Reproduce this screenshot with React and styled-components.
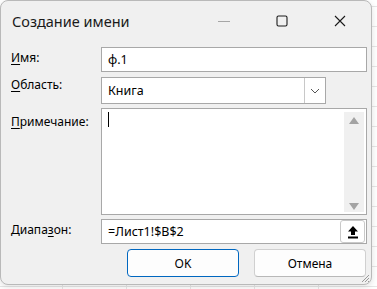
import React from "react";
import styled, { createGlobalStyle } from "styled-components";

const Global = createGlobalStyle`
  html, body { margin: 0; padding: 0; }
  body {
    width: 377px;
    height: 289px;
    overflow: hidden;
    background-color: #ffffff;
    background-image:
      linear-gradient(to right, #e6e6e6 1px, transparent 1px),
      linear-gradient(to bottom, #e6e6e6 1px, transparent 1px);
    background-size: 64px 20px;
    background-position: -2px 6px;
    font-family: "Segoe UI", "Noto Sans", sans-serif;
  }
`;

const Window = styled.div`
  box-sizing: border-box;
  width: 372px;
  height: 285px;
  background: #f0f0f0;
  border: 1px solid #b9b9b9;
  border-radius: 8px;
  box-shadow: 0 2px 6px rgba(0,0,0,0.12);
  display: flex;
  flex-direction: column;
  position: relative;
  overflow: hidden;
`;

const TitleBar = styled.div`
  height: 45px;
  display: flex;
  align-items: center;
  padding-left: 11px;
  padding-right: 2px;
  box-sizing: border-box;
  padding-bottom: 6px;
`;

const Title = styled.div`
  flex: 1;
  font-size: 14.5px;
  color: #1a1a1a;
`;

const Caption = styled.div`
  width: 58px;
  height: 40px;
  display: flex;
  align-items: center;
  justify-content: center;
`;

const Form = styled.div`
  display: grid;
  grid-template-columns: 90px 266px;
  padding-left: 10px;
  margin-top: 1px;
  row-gap: 4px;
`;

const Label = styled.div`
  font-size: 12px;
  line-height: 16px;
  color: #000;
  padding-top: ${p => p.$top ?? 3}px;
  u { text-decoration: underline; text-underline-offset: 2px; }
`;

const Field = styled.div`
  box-sizing: border-box;
  height: ${p => p.$h}px;
  margin-top: ${p => p.$mt || 0}px;
  background: #fff;
  border: 1px solid #a8a8a8;
  display: flex;
  align-items: center;
  padding-left: 6px;
  font-size: 12.5px;
  color: #000;
  position: relative;
`;

const SelectBox = styled(Field)`
  width: 225px;
  padding-right: 0;
`;

const SelectText = styled.div`
  flex: 1;
`;

const DropBtn = styled.div`
  box-sizing: border-box;
  width: 21px;
  height: 25px;
  border-left: 1px solid #c8c8c8;
  background: #fff;
  display: flex;
  align-items: center;
  justify-content: center;
`;

const TextArea = styled(Field)`
  align-items: flex-start;
  padding-top: 3px;
`;

const Caret = styled.div`
  width: 1px;
  height: 15px;
  background: #000;
`;

const ScrollBar = styled.div`
  position: absolute;
  right: 2px;
  top: 3px;
  bottom: 2px;
  width: 20px;
  background: #f0f0f0;
  display: flex;
  flex-direction: column;
  justify-content: space-between;
  align-items: center;
  padding: 5px 0 0;
`;

const RangeField = styled(Field)`
  padding-right: 1px;
`;

const RangeText = styled.div`
  flex: 1;
`;

const PickBtn = styled.div`
  box-sizing: border-box;
  width: 25px;
  height: 23px;
  background: #fff;
  border: 1px solid #c9c9c9;
  border-radius: 3px;
  display: flex;
  align-items: center;
  justify-content: center;
`;

const Buttons = styled.div`
  display: flex;
  gap: 15px;
  padding-left: 126px;
  margin-top: 5px;
`;

const Button = styled.button`
  box-sizing: border-box;
  width: ${p => p.$w}px;
  height: 28px;
  border-radius: 4px;
  background: #fdfdfd;
  border: 1px solid ${p => (p.$primary ? "#0067c0" : "#d0d0d0")};
  border-bottom-color: ${p => (p.$primary ? "#0067c0" : "#b8b8b8")};
  font-family: "Segoe UI", "Noto Sans", sans-serif;
  font-size: 12px;
  color: #000;
  padding: 0;
`;

const Grip = styled.svg`
  position: absolute;
  right: 1px;
  bottom: 1px;
`;

export default function App() {
  return (
    <>
      <Global />
      <Window>
        <TitleBar>
          <Title>Создание имени</Title>
          <Caption>
            <svg width="12" height="12" viewBox="0 0 12 12">
              <line x1="0" y1="6.5" x2="12" y2="6.5" stroke="#a6a6a6" strokeWidth="1" />
            </svg>
          </Caption>
          <Caption>
            <svg width="12" height="12" viewBox="0 0 12 12">
              <rect x="1" y="1" width="10" height="10" rx="1.5" fill="none" stroke="#1a1a1a" strokeWidth="1.1" />
            </svg>
          </Caption>
          <Caption>
            <svg width="12" height="12" viewBox="0 0 12 12">
              <path d="M1 1 L11 11 M11 1 L1 11" stroke="#1a1a1a" strokeWidth="1.1" />
            </svg>
          </Caption>
        </TitleBar>
        <Form>
          <Label><u>И</u>мя:</Label>
          <Field $h={25}>ф.1</Field>

          <Label $top={1}><u>О</u>бласть:</Label>
          <SelectBox $h={27} $mt={1}>
            <SelectText>Книга</SelectText>
            <DropBtn>
              <svg width="10" height="6" viewBox="0 0 10 6">
                <path d="M1 1 L5 5 L9 1" fill="none" stroke="#555" strokeWidth="1" />
              </svg>
            </DropBtn>
          </SelectBox>

          <Label $top={6}><u>П</u>римечание:</Label>
          <TextArea $h={107}>
            <Caret />
            <ScrollBar>
              <svg width="10" height="7" viewBox="0 0 10 7">
                <path d="M5 0 L10 7 L0 7 Z" fill="#a3a3a3" />
              </svg>
              <svg width="10" height="7" viewBox="0 0 10 7" style={{ marginBottom: 2 }}>
                <path d="M0 0 L10 0 L5 7 Z" fill="#a3a3a3" />
              </svg>
            </ScrollBar>
          </TextArea>

          <Label>Диапа<u>з</u>он:</Label>
          <RangeField $h={25}>
            <RangeText>=Лист1!$B$2</RangeText>
            <PickBtn>
              <svg width="12" height="14" viewBox="0 0 12 14">
                <path d="M6 1 L11 6.5 L8 6.5 L8 10 L4 10 L4 6.5 L1 6.5 Z" fill="#000" />
                <rect x="1" y="11.5" width="10" height="2" fill="#000" />
              </svg>
            </PickBtn>
          </RangeField>
        </Form>
        <Buttons>
          <Button $primary $w={112}>OK</Button>
          <Button $w={112}>Отмена</Button>
        </Buttons>
        <Grip width="10" height="10" viewBox="0 0 10 10">
          <path d="M9 2 L2 9 M9 5 L5 9 M9 8 L8 9" stroke="#9a9a9a" strokeWidth="1" />
        </Grip>
      </Window>
    </>
  );
}
